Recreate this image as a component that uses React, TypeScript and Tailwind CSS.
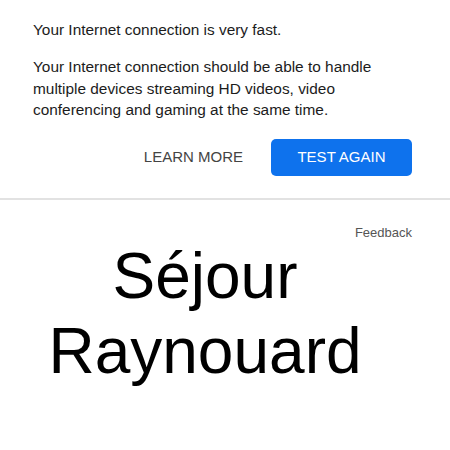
export default function App() {
  return (
    <div className="w-[450px] h-[450px] bg-white overflow-hidden font-['Liberation_Sans',Arial,sans-serif]">
      <div className="h-[198px] pl-[33px] pr-[30px] pt-[19px]">
        <p className="text-[15.4px] leading-[22px] text-[#1c1c1c]">Your Internet connection is very fast.</p>
        <p className="mt-[15px] text-[15.4px] leading-[21.5px] text-[#1c1c1c]">
          Your Internet connection should be able to handle multiple devices streaming HD videos, video
          conferencing and gaming at the same time.
        </p>
        <div className="mt-[18px] mr-[8px] flex items-center justify-end gap-[28px]">
          <button className="text-[15px] text-[#444]">LEARN MORE</button>
          <button className="w-[141px] h-[37px] rounded-[5px] bg-[#0e72ed] text-[15px] text-white">
            TEST AGAIN
          </button>
        </div>
      </div>
      <div className="h-[2px] bg-[#e2e2e2]" />
      <div className="flex justify-end pr-[38px] pt-[25px]">
        <span className="text-[13px] text-[#555] leading-[16px]">Feedback</span>
      </div>
      <div className="pr-[40px] text-center text-[64px] leading-[75px] text-black -mt-[2px]">
        <div>Séjour</div>
        <div>Raynouard</div>
      </div>
    </div>
  );
}
